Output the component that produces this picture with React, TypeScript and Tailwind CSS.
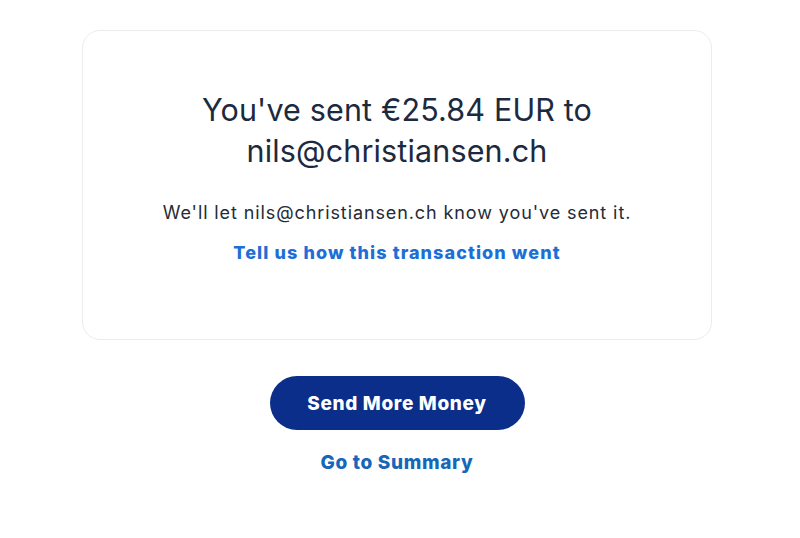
export default function App() {
  return (
    <div className="w-[800px] h-[538px] bg-white flex flex-col items-center pr-[6px]" style={{ fontFamily: "Inter, 'Liberation Sans', sans-serif" }}>
      <div className="mt-[30px] w-[630px] h-[310px] rounded-[18px] border border-[#ececec] flex flex-col items-center pt-[58px]">
        <h1 className="text-[30.5px] leading-[41px] text-[#1c2a3f] text-center font-normal w-[440px] tracking-[0.005em]">
          You've sent €25.84 EUR to nils@christiansen.ch
        </h1>
        <p className="mt-[30px] text-[18px] leading-[24px] text-[#262b36] tracking-[0.05em]">
          We'll let nils@christiansen.ch know you've sent it.
        </p>
        <a className="mt-[16px] text-[18px] leading-[24px] font-extrabold text-[#1c6fd6] tracking-[0.06em]">
          Tell us how this transaction went
        </a>
      </div>
      <button className="mt-[36px] w-[255px] h-[54px] rounded-full bg-[#0a2e8a] text-white text-[19px] font-extrabold tracking-[0.035em] pt-[3px]">
        Send More Money
      </button>
      <a className="mt-[21px] text-[19px] leading-[24px] font-extrabold text-[#1667b8] tracking-[0.035em]">Go to Summary</a>
    </div>
  );
}
